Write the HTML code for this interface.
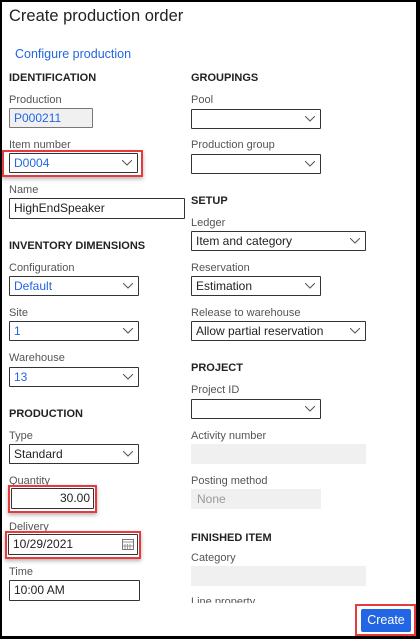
<!DOCTYPE html>
<html><head><style>
*{margin:0;padding:0;box-sizing:border-box}
body{width:420px;height:639px;background:#000;position:relative;overflow:hidden;font-family:"Liberation Sans",sans-serif}
#p{position:absolute;left:2px;top:2px;width:414px;height:634px;background:#fff;overflow:hidden}
.a{position:absolute;white-space:nowrap}
.l{font-size:11px;color:#555}
.h{font-size:11px;font-weight:bold;color:#222}
.f{position:absolute;border:1px solid #333;background:#fff;font-size:12px;color:#222;padding-left:4px;line-height:18px;border-radius:1px}
.g{position:absolute;background:#f0f0f0;font-size:12px;color:#999;padding-left:6px;line-height:20px}
.b{color:#2266e3}
.f svg{position:absolute;right:5px;top:6px}
.r{position:absolute;border:2px solid #e8393e;box-shadow:0 2px 4px rgba(0,0,0,.3)}
</style></head><body>
<div id="p">
<div class="a" style="left:7px;top:5px;font-size:16.5px;color:#222">Create production order</div>
<div class="a b" style="left:13px;top:45px;font-size:12.5px">Configure production</div>

<div class="a h" style="left:7px;top:70px">IDENTIFICATION</div>
<div class="a l" style="left:7px;top:92px">Production</div>
<div class="f b" style="left:7px;top:106px;width:84px;height:20px;background:#f0f0f0;border-color:#777">P000211</div>
<div class="a l" style="left:7px;top:137px">Item number</div>
<div class="r" style="left:0px;top:148px;width:141px;height:27px"></div>
<div class="f b" style="left:7px;top:151px;width:129px;height:20px">D0004<svg width="10" height="6"><path d="M0 0L5 5L10 0" fill="none" stroke="#555"/></svg></div>
<div class="a l" style="left:7px;top:182px">Name</div>
<div class="f" style="left:7px;top:196px;width:176px;height:21px">HighEndSpeaker</div>

<div class="a h" style="left:7px;top:238px">INVENTORY DIMENSIONS</div>
<div class="a l" style="left:7px;top:260px">Configuration</div>
<div class="f b" style="left:7px;top:274px;width:130px;height:20px">Default<svg width="10" height="6"><path d="M0 0L5 5L10 0" fill="none" stroke="#555"/></svg></div>
<div class="a l" style="left:7px;top:305px">Site</div>
<div class="f b" style="left:7px;top:319px;width:130px;height:20px">1<svg width="10" height="6"><path d="M0 0L5 5L10 0" fill="none" stroke="#555"/></svg></div>
<div class="a l" style="left:7px;top:350px">Warehouse</div>
<div class="f b" style="left:7px;top:365px;width:130px;height:20px">13<svg width="10" height="6"><path d="M0 0L5 5L10 0" fill="none" stroke="#555"/></svg></div>

<div class="a h" style="left:7px;top:406px">PRODUCTION</div>
<div class="a l" style="left:7px;top:428px">Type</div>
<div class="f" style="left:7px;top:442px;width:130px;height:20px">Standard<svg width="10" height="6"><path d="M0 0L5 5L10 0" fill="none" stroke="#555"/></svg></div>
<div class="a l" style="left:7px;top:473px">Quantity</div>
<div class="r" style="left:6px;top:483px;width:89px;height:28px"></div>
<div class="f" style="left:9px;top:486px;width:83px;height:21px;text-align:right;padding-right:3px">30.00</div>
<div class="a l" style="left:7px;top:519px">Delivery</div>
<div class="r" style="left:3px;top:529px;width:136px;height:28px"></div>
<div class="f" style="left:6px;top:532px;width:130px;height:21px">10/29/2021<svg width="12" height="11" style="top:4px;right:3px"><rect x=".5" y=".5" width="11" height="10" fill="none" stroke="#777"/><path d="M1 3h10M3 5v5M5.5 5v5M8 5v5M1 7h10" stroke="#999"/></svg></div>
<div class="a l" style="left:7px;top:564px">Time</div>
<div class="f" style="left:7px;top:578px;width:131px;height:21px">10:00 AM</div>

<div class="a h" style="left:189px;top:70px">GROUPINGS</div>
<div class="a l" style="left:189px;top:92px">Pool</div>
<div class="f" style="left:189px;top:107px;width:130px;height:20px"><svg width="10" height="6"><path d="M0 0L5 5L10 0" fill="none" stroke="#555"/></svg></div>
<div class="a l" style="left:189px;top:137px">Production group</div>
<div class="f" style="left:189px;top:152px;width:130px;height:20px"><svg width="10" height="6"><path d="M0 0L5 5L10 0" fill="none" stroke="#555"/></svg></div>
<div class="a h" style="left:189px;top:193px">SETUP</div>
<div class="a l" style="left:189px;top:215px">Ledger</div>
<div class="f" style="left:189px;top:229px;width:175px;height:20px">Item and category<svg width="10" height="6"><path d="M0 0L5 5L10 0" fill="none" stroke="#555"/></svg></div>
<div class="a l" style="left:189px;top:260px">Reservation</div>
<div class="f" style="left:189px;top:274px;width:130px;height:20px">Estimation<svg width="10" height="6"><path d="M0 0L5 5L10 0" fill="none" stroke="#555"/></svg></div>
<div class="a l" style="left:189px;top:305px">Release to warehouse</div>
<div class="f" style="left:189px;top:319px;width:175px;height:20px">Allow partial reservation<svg width="10" height="6"><path d="M0 0L5 5L10 0" fill="none" stroke="#555"/></svg></div>
<div class="a h" style="left:189px;top:360px">PROJECT</div>
<div class="a l" style="left:189px;top:382px">Project ID</div>
<div class="f" style="left:189px;top:397px;width:130px;height:20px"><svg width="10" height="6"><path d="M0 0L5 5L10 0" fill="none" stroke="#555"/></svg></div>
<div class="a l" style="left:189px;top:428px">Activity number</div>
<div class="g" style="left:189px;top:442px;width:175px;height:20px"></div>
<div class="a l" style="left:189px;top:473px">Posting method</div>
<div class="g" style="left:189px;top:487px;width:130px;height:20px">None</div>
<div class="a h" style="left:189px;top:530px">FINISHED ITEM</div>
<div class="a l" style="left:189px;top:550px">Category</div>
<div class="g" style="left:189px;top:564px;width:175px;height:20px"></div>
<div style="position:absolute;left:189px;top:594px;width:150px;height:7px;overflow:hidden"><div class="a l" style="left:0;top:0">Line property</div></div>

<div class="r" style="left:353px;top:602px;width:61px;height:32px;box-shadow:none"></div>
<div class="a" style="left:359px;top:607px;width:50px;height:23px;background:#2266e3;color:#fff;font-size:12.5px;line-height:23px;text-align:center;border-radius:2px">Create</div>
</div>
</body></html>
